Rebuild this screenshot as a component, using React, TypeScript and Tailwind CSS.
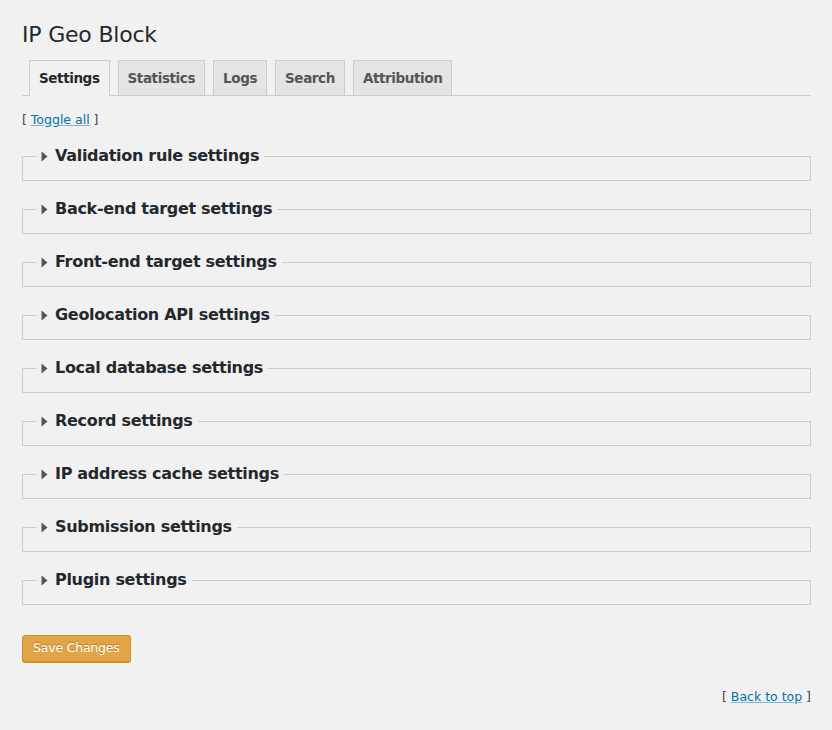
import React from "react";

const sections = [
  "Validation rule settings",
  "Back-end target settings",
  "Front-end target settings",
  "Geolocation API settings",
  "Local database settings",
  "Record settings",
  "IP address cache settings",
  "Submission settings",
  "Plugin settings",
];

const tabs = ["Settings", "Statistics", "Logs", "Search", "Attribution"];

function Triangle() {
  return (
    <svg width="7" height="11" viewBox="0 0 7 11" className="shrink-0">
      <path d="M0.5 0.5 L6.5 5.5 L0.5 10.5 Z" fill="#555" />
    </svg>
  );
}

export default function App() {
  return (
    <div
      className="min-h-[730px] w-[832px] bg-[#f1f1f1] text-[#23282d] pl-[22px] pr-[21px] pt-[21px]"
      style={{ fontFamily: '"DejaVu Sans", Verdana, sans-serif' }}
    >
      <h1 className="text-[22px] leading-[28px] font-normal text-[#23282d] tracking-[-0.2px]">IP Geo Block</h1>

      <div className="mt-[12px] flex items-end gap-[8px] border-b border-[#ccc] pl-[7px] h-[35px]">
        {tabs.map((t, i) => (
          <div
            key={t}
            className={
              "flex items-center px-[9px] border border-[#ccc] border-b-0 text-[13.5px] font-bold tracking-[-0.4px] " +
              (i === 0
                ? "bg-[#f1f1f1] text-[#23282d] -mb-px h-[36px] pb-px"
                : "bg-[#e4e4e4] text-[#555] h-[35px]")
            }
          >
            {t}
          </div>
        ))}
      </div>

      <div className="mt-[15px] text-[12.5px] leading-[18px] text-[#444]">
        [ <a className="text-[#0073aa] underline decoration-[#7fb6d3]">Toggle all</a> ]
      </div>

      <div className="mt-[17px] flex flex-col gap-[18px]">
        {sections.map((s) => (
          <fieldset key={s} className="border border-[#ccc] pb-[14px] m-0 min-w-0">
            <legend className="ml-[13px] px-[5px] h-[20px] flex items-center gap-[7px]">
              <Triangle />
              <span className="text-[16px] leading-[20px] font-bold text-[#23282d] tracking-[-0.3px]">{s}</span>
            </legend>
          </fieldset>
        ))}
      </div>

      <button className="mt-[30px] h-[27px] px-[10px] rounded-[3px] bg-[#e2a546] border border-[#c9922f] shadow-[0_1px_0_#c9922f] text-white text-[12.5px] font-normal tracking-[-0.2px] [text-shadow:0_-1px_1px_#b07a25]">
        Save Changes
      </button>

      <div className="mt-[26px] flex justify-end text-[12.5px] leading-[18px] text-[#444]">
        <span>
          [ <a className="text-[#0073aa] underline decoration-[#7fb6d3]">Back to top</a> ]
        </span>
      </div>
    </div>
  );
}
